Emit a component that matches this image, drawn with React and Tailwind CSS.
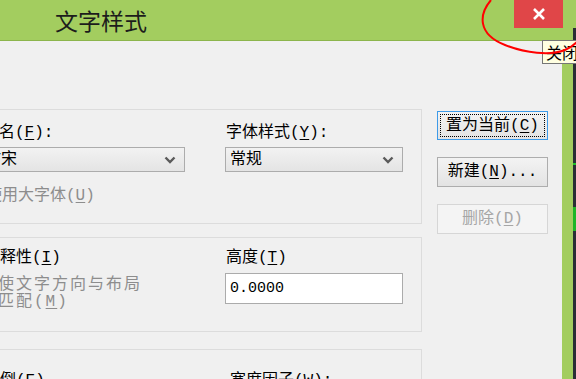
import React from 'react'

const FONT = { fontFamily: '"Liberation Mono", "Noto Sans CJK SC", monospace' }

function Key({ children }) {
  return <u className="underline underline-offset-2">{children}</u>
}

function Chevron() {
  return (
    <svg width="12" height="8" viewBox="0 0 12 8" className="shrink-0">
      <path d="M1.5 1.5 L6 6 L10.5 1.5" fill="none" stroke="#5a5a5a" strokeWidth="2.4" />
    </svg>
  )
}

function Select({ value, className }) {
  return (
    <div className={`h-[25px] flex items-center justify-between border border-[#acacac] bg-gradient-to-b from-[#f2f2f2] to-[#e4e4e4] pl-[4px] pr-[8px] ${className}`}>
      <span className="text-[16px] leading-[18px] text-black whitespace-nowrap">{value}</span>
      <Chevron />
    </div>
  )
}

function Check() {
  return <span className="w-[13px] h-[13px] shrink-0 border border-[#c5c5c5] bg-white" />
}

export default function App() {
  return (
    <div className="relative w-[576px] h-[379px] overflow-hidden flex text-black" style={FONT}>
      <div className="w-[573px] flex flex-col bg-[#a3cd5f]">
        {/* title bar */}
        <div className="h-[41px] shrink-0 flex border-b border-[#8cb54c]">
          <div className="flex-1 pl-[55px] pt-[5px] text-[23px] leading-[30px] text-[#1c1c1c]" style={{ fontFamily: '"Noto Sans CJK SC", sans-serif' }}>
            文字样式
          </div>
          <div className="w-[49px] h-[28px] mr-[10px] bg-[#e04648] flex items-center justify-center">
            <svg width="14" height="14" viewBox="0 0 14 14">
              <path d="M2 2 L12 12 M12 2 L2 12" stroke="#fff" strokeWidth="2.6" />
            </svg>
          </div>
        </div>

        {/* body */}
        <div className="flex-1 flex">
          <div className="w-[562px] bg-[#f0f0f0] flex overflow-hidden">
            {/* group boxes */}
            <div className="-ml-[40px] w-[462px] shrink-0 flex flex-col mt-[68px]">
              <div className="h-[115px] shrink-0 border border-[#dcdcdc] flex pl-[6px]">
                <div className="w-[218px] shrink-0 flex flex-col pt-[14px]">
                  <div className="text-[16px] leading-[18px] whitespace-nowrap">字体名(<Key>F</Key>):</div>
                  <Select value="仿宋" className="mt-[5px] ml-[14px] w-[204px] !pl-[3px]" />
                  <div className="mt-[15px] flex items-center h-[18px]">
                    <Check />
                    <span className="ml-[6px] text-[16px] leading-[18px] text-[#8d8d8d] whitespace-nowrap">使用大字体(<Key>U</Key>)</span>
                  </div>
                </div>
                <div className="ml-[40px] w-[178px] shrink-0 flex flex-col pt-[14px]">
                  <div className="pl-[1px] text-[16px] leading-[18px] whitespace-nowrap">字体样式(<Key>Y</Key>):</div>
                  <Select value="常规" className="mt-[5px] w-[178px]" />
                </div>
              </div>

              <div className="mt-[13px] h-[95px] shrink-0 border border-[#dcdcdc] flex pl-[6px]">
                <div className="w-[218px] shrink-0 flex flex-col pt-[11px]">
                  <div className="flex items-center h-[18px]">
                    <Check />
                    <span className="ml-[4px] text-[16px] leading-[18px] whitespace-nowrap">注释性(<Key>I</Key>)</span>
                  </div>
                  <div className="mt-[10px] pl-[12px] flex items-start">
                    <span className="mt-[2px] w-[13px] h-[13px] shrink-0 border border-[#d5d5d5] bg-[#f4f4f4]" />
                    <span className="ml-[6px] text-[16px] leading-[17px] tracking-[2px] text-[#8d8d8d] whitespace-nowrap">
                      使文字方向与布局<br />匹配(<Key>M</Key>)
                    </span>
                  </div>
                </div>
                <div className="ml-[40px] w-[178px] shrink-0 flex flex-col pt-[11px]">
                  <div className="pl-[1px] text-[16px] leading-[18px] whitespace-nowrap">高度(<Key>T</Key>)</div>
                  <div className="mt-[6px] h-[31px] border border-[#ababab] bg-white pl-[4px] flex items-center text-[15px] leading-[18px]">
                    0.0000
                  </div>
                </div>
              </div>

              <div className="mt-[17px] h-[80px] shrink-0 border border-[#dcdcdc] flex pl-[6px]">
                <div className="w-[218px] shrink-0 pt-[22px]">
                  <div className="flex items-center h-[18px]">
                    <Check />
                    <span className="ml-[4px] text-[16px] leading-[18px] whitespace-nowrap">颠倒(<Key>E</Key>)</span>
                  </div>
                </div>
                <div className="ml-[40px] w-[178px] shrink-0 pt-[22px]">
                  <div className="pl-[5px] text-[16px] leading-[18px] whitespace-nowrap">宽度因子(<Key>W</Key>):</div>
                </div>
              </div>
            </div>

            {/* buttons */}
            <div className="ml-[15px] w-[111px] shrink-0 flex flex-col gap-[17px] mt-[70px]">
              <div className="h-[29px] border border-[#3d9ae8] bg-gradient-to-b from-[#f3f3f3] to-[#e3e3e3] p-[2px]">
                <div className="h-full border border-dotted border-black flex items-center justify-center text-[16px] leading-[18px] whitespace-nowrap">
                  置为当前(<Key>C</Key>)
                </div>
              </div>
              <div className="h-[30px] border border-[#adadad] bg-gradient-to-b from-[#f3f3f3] to-[#e3e3e3] flex items-center justify-center text-[16px] leading-[18px] whitespace-nowrap">
                新建(<Key>N</Key>)...
              </div>
              <div className="h-[30px] border border-[#d6d6d6] bg-[#f4f4f4] flex items-center justify-center text-[16px] leading-[18px] text-[#a6a6a6] whitespace-nowrap">
                删除(<Key>D</Key>)
              </div>
            </div>
          </div>
        </div>
      </div>

      {/* right edge strip */}
      <div className="w-[3px] flex flex-col">
        <div className="h-[28px] bg-[#a3cd5f]" />
        <div className="flex-1 bg-[#2a2e35] flex flex-col">
          <div className="mt-[135px] h-[2px] bg-[#22c02a]" />
          <div className="mt-[42px] h-[24px] bg-[#1fb526]" />
        </div>
      </div>

      {/* tooltip */}
      <div className="absolute left-[542px] top-[40px] w-[60px] h-[24px] border border-[#767676] bg-[#ffffe1] pl-[3px] text-[16px] leading-[22px] whitespace-nowrap" style={{ fontFamily: '"Noto Sans CJK SC", sans-serif' }}>
        关闭
      </div>

      {/* hand-drawn red ellipse */}
      <svg className="absolute left-0 top-0 pointer-events-none" width="576" height="379">
        <path d="M491 0 C479 14, 477 34, 505 45 C525 53, 550 56, 565 50 C570 48, 574 45, 578 41" fill="none" stroke="#ff0000" strokeWidth="2" />
      </svg>
    </div>
  )
}
